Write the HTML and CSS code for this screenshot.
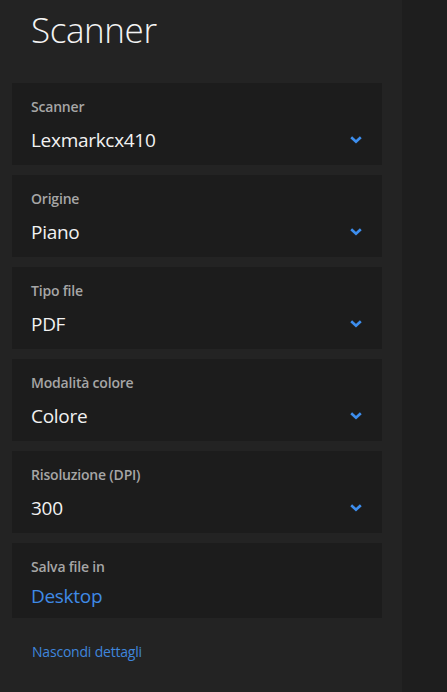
FILE: index.html
```html
<!DOCTYPE html>
<html lang="it">
<head>
<meta charset="utf-8">
<title>Scanner</title>
<link rel="stylesheet" href="styles.css">
</head>
<body>
<div class="app">
  <main class="panel">
    <h1 class="title">Scanner</h1>
    <div class="cards">
      <div class="card">
        <div class="label">Scanner</div>
        <div class="row"><span class="value">Lexmarkcx410</span><svg class="chev" viewBox="0 0 12 8" width="12" height="8"><polyline points="1.2,1.2 6,5.8 10.8,1.2"/></svg></div>
      </div>
      <div class="card">
        <div class="label">Origine</div>
        <div class="row"><span class="value">Piano</span><svg class="chev" viewBox="0 0 12 8" width="12" height="8"><polyline points="1.2,1.2 6,5.8 10.8,1.2"/></svg></div>
      </div>
      <div class="card">
        <div class="label">Tipo file</div>
        <div class="row"><span class="value">PDF</span><svg class="chev" viewBox="0 0 12 8" width="12" height="8"><polyline points="1.2,1.2 6,5.8 10.8,1.2"/></svg></div>
      </div>
      <div class="card">
        <div class="label">Modalità colore</div>
        <div class="row"><span class="value">Colore</span><svg class="chev" viewBox="0 0 12 8" width="12" height="8"><polyline points="1.2,1.2 6,5.8 10.8,1.2"/></svg></div>
      </div>
      <div class="card">
        <div class="label">Risoluzione (DPI)</div>
        <div class="row"><span class="value">300</span><svg class="chev" viewBox="0 0 12 8" width="12" height="8"><polyline points="1.2,1.2 6,5.8 10.8,1.2"/></svg></div>
      </div>
      <div class="card card-short">
        <div class="label">Salva file in</div>
        <div class="row"><span class="value link">Desktop</span></div>
      </div>
    </div>
    <a class="toggle" href="#">Nascondi dettagli</a>
  </main>
  <aside class="side"></aside>
</div>
</body>
</html>
```
FILE: styles.css
```css
html, body {
  margin: 0;
  padding: 0;
  height: 100%;
}
body {
  background: #232323;
  font-family: "Open Sans", "Noto Sans", "DejaVu Sans", sans-serif;
  color: #ffffff;
}
.app {
  display: flex;
  width: 447px;
  height: 692px;
  overflow: hidden;
}
.panel {
  width: 402px;
  flex: none;
  background: #232323;
  box-sizing: border-box;
  padding: 0 20px 0 12px;
  display: flex;
  flex-direction: column;
}
.side {
  flex: 1;
  background: #1e1e1e;
}
.title {
  margin: 0;
  padding: 7px 0 0 19px;
  height: 83px;
  box-sizing: border-box;
  font-size: 35px;
  font-weight: 300;
  line-height: 46px;
  letter-spacing: -0.4px;
  color: #f4f4f4;
}
.cards {
  display: flex;
  flex-direction: column;
  gap: 10px;
}
.card {
  background: #1c1c1c;
  height: 82px;
  box-sizing: border-box;
  padding: 14px 19px 0 19px;
}
.card-short {
  height: 75px;
}
.label {
  font-size: 14px;
  font-weight: 600;
  line-height: 20px;
  color: #a6a6a6;
  letter-spacing: -0.2px;
}
.row {
  display: flex;
  align-items: center;
  justify-content: space-between;
  margin-top: 9px;
  height: 28px;
}
.card-short .row {
  margin-top: 5px;
}
.value {
  font-size: 19px;
  line-height: 28px;
  color: #f2f2f2;
  letter-spacing: -0.3px;
}
.value.link {
  color: #3f8ae6;
}
.chev {
  margin-right: 1px;
  fill: none;
  stroke: #3d8eee;
  stroke-width: 2.6;
  stroke-linecap: butt;
  stroke-linejoin: miter;
}
.toggle {
  margin: 24px 0 0 20px;
  font-size: 14px;
  line-height: 20px;
  color: #3f86dc;
  text-decoration: none;
  letter-spacing: -0.2px;
}
```
